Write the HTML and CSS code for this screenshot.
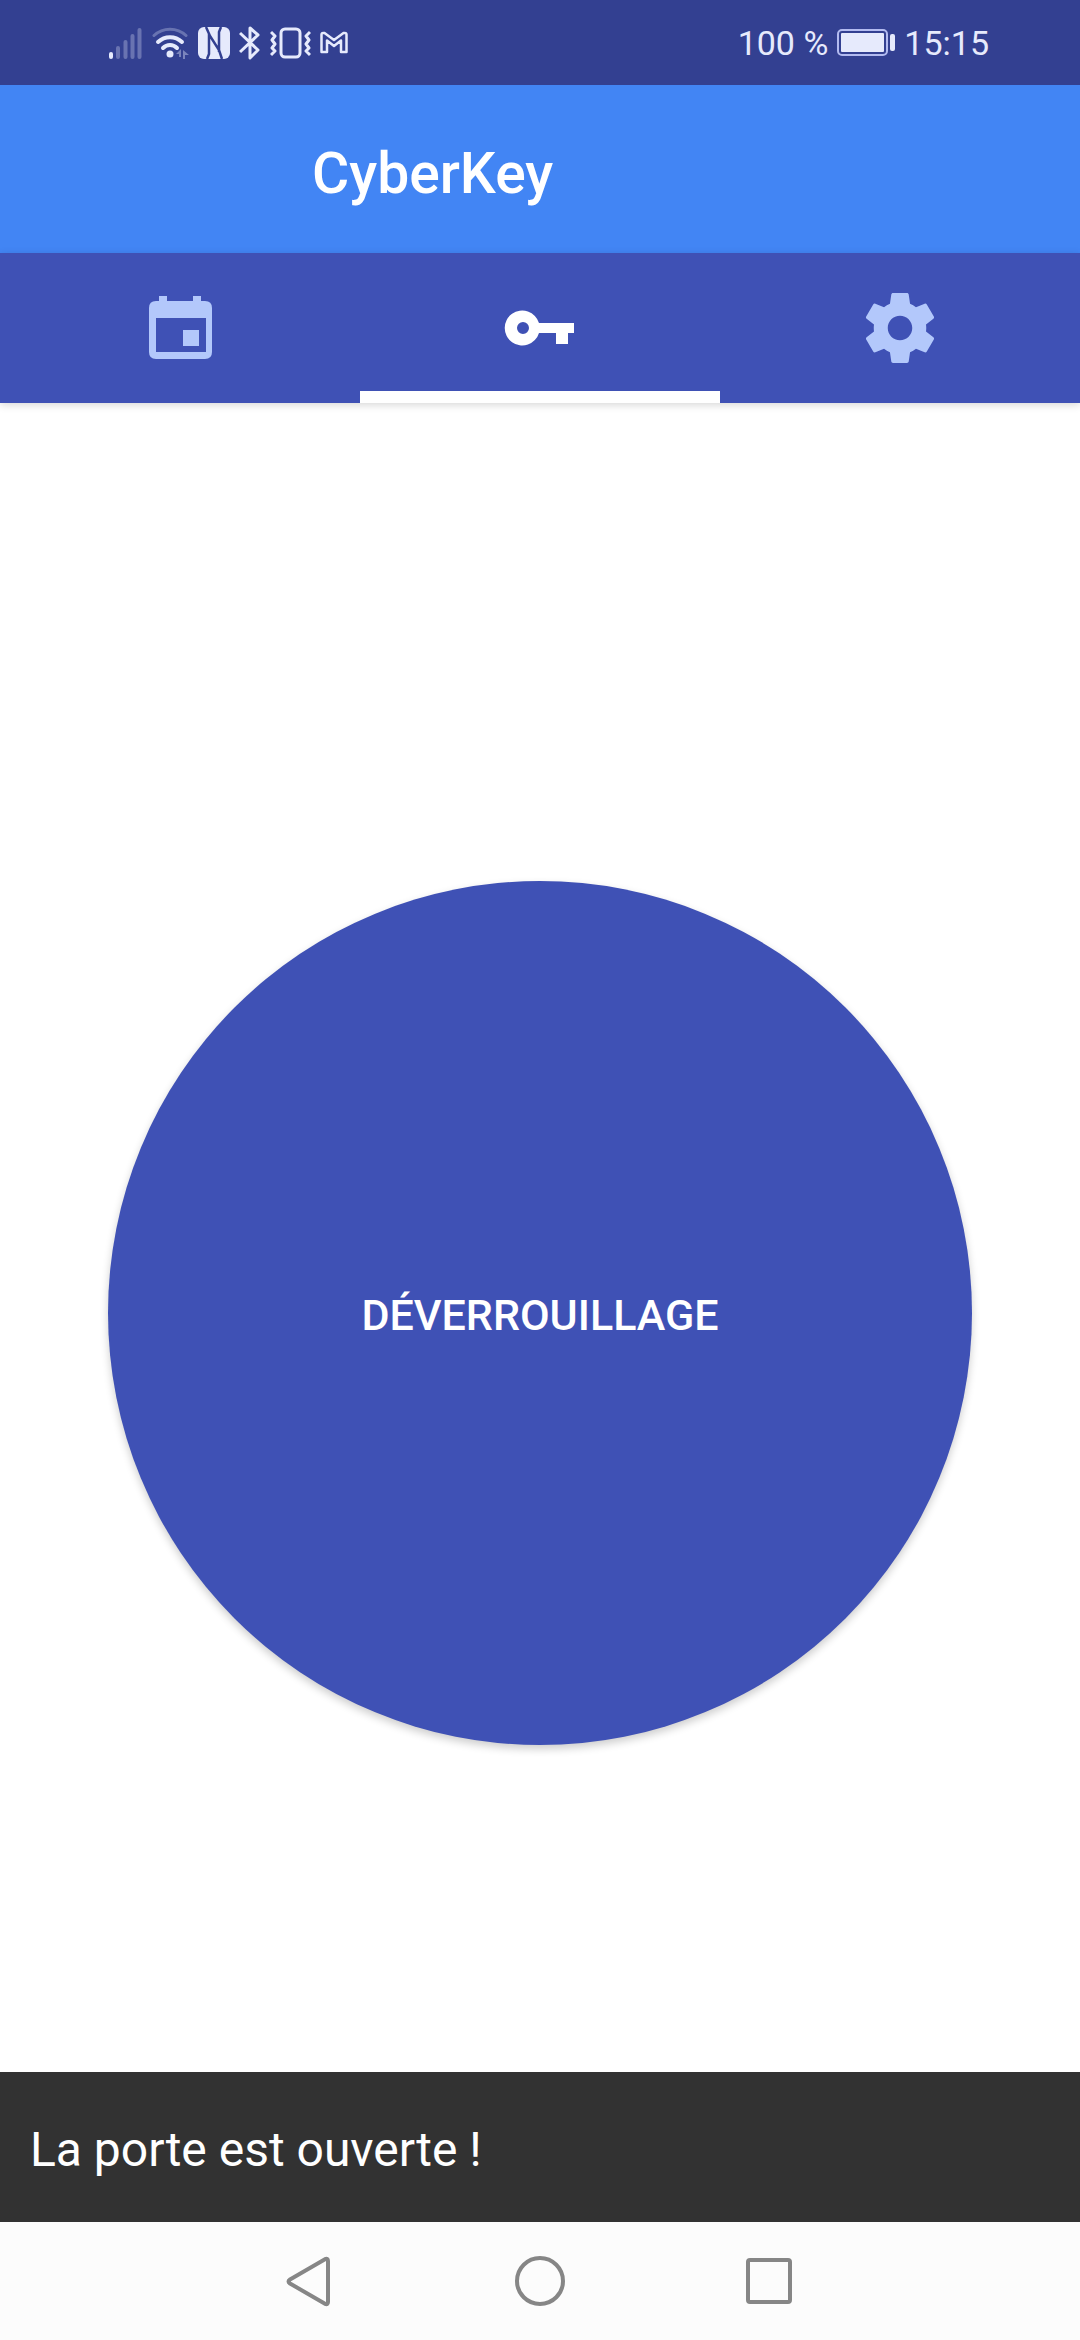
FILE: index.html
```html
<!DOCTYPE html>
<html lang="fr">
<head>
<meta charset="utf-8">
<meta name="viewport" content="width=device-width, initial-scale=1">
<title>CyberKey</title>
<link rel="stylesheet" href="styles.css">
</head>
<body>
<div class="status">
  <div class="status-icons">
    <svg width="34" height="34" viewBox="0 0 34 34" stroke="currentColor" stroke-width="4" stroke-linecap="round"><path d="M2 28v3"/><path opacity=".3" d="M9 22v9M16.500 16v15M23.500 10v21M30.500 4v27"/></svg>
    <svg width="37" height="34" viewBox="0 0 37 34" fill="none" stroke="currentColor" stroke-width="4" stroke-linecap="round"><path opacity=".3" stroke-width="3" d="M2 9.500C11 1 25 1 34 9.500"/><path d="M6 16C13 9.500 23 9.500 30 16M11 22c4-4 10-4 14 0"/><circle cx="18" cy="28" r="3.500" fill="currentColor" stroke="none"/><path opacity=".4" stroke="none" fill="currentColor" d="M24 28l5-5v8h-2v-3zM31 33v-9l6 5h-4v4z"/></svg>
    <svg width="32" height="34" viewBox="0 0 32 34"><rect y="1" width="32" height="32" rx="6" fill="currentColor"/><path d="M8 1l4 9 9 14 3 9M11 8v20l-2 5M21 26V6l2-5" fill="none" stroke="#334091" stroke-width="2.500"/></svg>
    <svg width="22" height="34" viewBox="0 0 22 34" fill="none" stroke="currentColor" stroke-width="3" stroke-linejoin="round"><path d="M1 7l18 17-8 8V2l8 7L1 26"/></svg>
    <svg width="41" height="34" viewBox="0 0 41 34" fill="none" stroke="currentColor" stroke-width="3" stroke-linejoin="round"><rect x="11" y="3" width="19" height="28" rx="4"/><path d="M1 6l4 4-3 4 3 4-3 4 3 3-4 4M40 6l-4 4 3 4-3 4 3 4-3 3 4 4"/></svg>
    <svg width="28" height="34" viewBox="0 0 28 34" fill="none" stroke="currentColor" stroke-width="2.500" stroke-linejoin="round"><path d="M1.500 26V8.500q0-2 3-1.500L14 14l9.500-7q3-.5 3 1.500V26H21V14.500L14 20l-7-5.500V26z"/></svg>
  </div>
  <div class="status-info">
    <span>100 %</span>
    <svg width="58" height="34" viewBox="0 0 58 34"><rect x="1" y="4" width="49" height="25" rx="4" fill="none" stroke="#b3bbf0" stroke-width="2"/><rect x="4" y="7" width="43" height="19" rx="1" fill="currentColor"/><rect x="53" y="8" width="5" height="17" rx="2" fill="currentColor"/></svg>
    <span>15:15</span>
  </div>
</div>
<header class="appbar"><h1 class="title">CyberKey</h1></header>
<nav class="tabs">
  <button class="tab" type="button" aria-label="Calendrier"><svg width="84" height="84" viewBox="0 0 84 84" fill="currentColor"><path fill-rule="evenodd" d="M21 10h8v5h26v-5h8v5h4q7 0 7 7v44q0 7-7 7H18q-7 0-7-7V22q0-7 7-7h3zM18 32v34h50V32zM45 44h16v16H45z"/></svg></button>
  <button class="tab tab-active" type="button" aria-label="Clé"><svg width="84" height="84" viewBox="0 0 84 84" fill="currentColor"><path fill-rule="evenodd" d="M41 37h35v10h-6v11H58V47H41a17.500 17.500 0 1 1 0-10zM25 36a6 6 0 1 0 0 12 6 6 0 0 0 0-12z"/></svg></button>
  <button class="tab" type="button" aria-label="Paramètres"><svg width="84" height="84" viewBox="0 0 24 24" fill="currentColor"><path d="M19.430 12.980c.04-.32.07-.64.07-.98s-.03-.66-.07-.98l2.110-1.650c.19-.15.24-.42.12-.64l-2-3.460c-.12-.22-.39-.3-.61-.22l-2.490 1c-.52-.4-1.080-.73-1.690-.98l-.38-2.650C14.460 2.180 14.250 2 14 2h-4c-.25 0-.46.18-.49.42l-.38 2.650c-.61.25-1.170.59-1.690.98l-2.490-1c-.23-.09-.49 0-.61.22l-2 3.460c-.13.22-.07.49.12.64l2.110 1.650c-.04.32-.07.65-.07.98s.03.66.07.98l-2.110 1.650c-.19.15-.24.42-.12.64l2 3.460c.12.22.39.3.61.22l2.490-1c.52.4 1.080.73 1.690.98l.38 2.650c.03.24.24.42.49.42h4c.25 0 .46-.18.49-.42l.38-2.650c.61-.25 1.170-.59 1.690-.98l2.490 1c.23.09.49 0 .61-.22l2-3.460c.12-.22.07-.49-.12-.64zM12 15.500c-1.930 0-3.500-1.570-3.500-3.500s1.570-3.500 3.500-3.500 3.500 1.570 3.500 3.500-1.570 3.500-3.500 3.500z"/></svg></button>
</nav>
<main class="content">
  <button class="unlock" type="button">DÉVERROUILLAGE</button>
  <div class="snackbar" role="status">La porte est ouverte !</div>
</main>
<footer class="navbar">
  <button class="nav-key" type="button" aria-label="Retour"><svg width="60" height="60" viewBox="0 0 60 60" fill="none" stroke="currentColor" stroke-width="4" stroke-linejoin="round"><path d="M9 28.500L44 8.200q3-1.200 3 1.800v41q0 3-3 1.800L9 32.500q-3-2 0-4z"/></svg></button>
  <button class="nav-key" type="button" aria-label="Accueil"><svg width="60" height="60" viewBox="0 0 60 60" fill="none" stroke="currentColor" stroke-width="4"><circle cx="30" cy="30" r="23"/></svg></button>
  <button class="nav-key" type="button" aria-label="Applications récentes"><svg width="60" height="60" viewBox="0 0 60 60" fill="none" stroke="currentColor" stroke-width="4"><rect x="9" y="9" width="42" height="42" rx="2"/></svg></button>
</footer>
</body>
</html>
```
FILE: styles.css
```css
* {
  box-sizing: border-box;
}

body {
  display: flex;
  flex-direction: column;
  min-height: 100vh;
  margin: 0;
  background: #fff;
  font-family: Roboto, sans-serif;
}

button {
  padding: 0;
  border: 0;
  background: none;
  color: inherit;
  font: inherit;
}

svg {
  display: block;
  flex: none;
}

.status {
  display: flex;
  align-items: center;
  justify-content: space-between;
  height: 85px;
  padding: 0 91px 0 109px;
  background: #334091;
  color: #e6eafc;
  font-size: 34px;
}

.status-icons,
.status-info {
  display: flex;
  align-items: center;
  gap: 9px;
}

.appbar {
  display: flex;
  align-items: center;
  height: 168px;
  padding: 10px 312px 0;
  background: #4285f4;
}

.title {
  margin: 0;
  color: #fff;
  font-size: 57px;
  font-weight: 500;
  line-height: 68px;
}

.tabs {
  position: relative;
  display: grid;
  grid-template-columns: repeat(3, 1fr);
  height: 150px;
  background: #3f51b5;
  box-shadow: 0 2px 8px rgba(0, 0, 0, .16);
}

.tab {
  display: flex;
  align-items: center;
  justify-content: center;
  color: #b3c8fb;
}

.tab-active {
  padding-top: 12px;
  border-bottom: 12px solid #fff;
  color: #fff;
}

.content {
  position: relative;
  display: flex;
  flex: 1;
  align-items: center;
  justify-content: center;
}

.unlock {
  width: 80%;
  padding-top: 4px;
  aspect-ratio: 1;
  border-radius: 50%;
  background: #3f51b5;
  box-shadow: 0 4px 8px rgba(0, 0, 0, .2);
  color: #fff;
  font-size: 43px;
  font-weight: 500;
}

.snackbar {
  position: absolute;
  right: 0;
  bottom: 0;
  left: 0;
  padding: 51px 30px 45px;
  background: #323232;
  color: #fff;
  font-size: 48px;
  line-height: 54px;
}

.navbar {
  display: flex;
  align-items: center;
  justify-content: center;
  gap: 169px;
  height: 118px;
  background: #fcfcfc;
  color: #868686;
}

.nav-key {
  width: 60px;
  height: 60px;
}
```
